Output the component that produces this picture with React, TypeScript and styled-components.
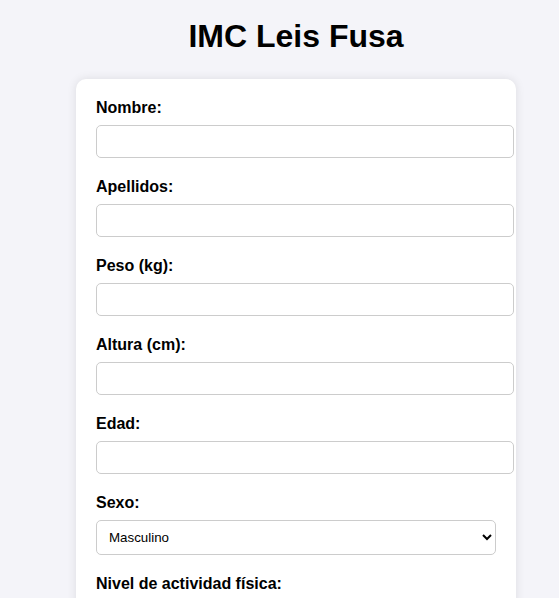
import React, { useState } from 'react';
import styled, { createGlobalStyle } from 'styled-components';

const GlobalStyle = createGlobalStyle`
  body {
    margin: 0;
    background: #f4f4f9;
    font-family: "Liberation Sans", Arial, sans-serif;
    color: #000;
    overflow: hidden;
  }
`;

const Page = styled.div`
  padding: 18px 0 20px 76px;
`;

const Column = styled.div`
  width: 440px;
`;

const Title = styled.h1`
  margin: 0 0 24px;
  font-size: 32px;
  font-weight: bold;
  text-align: center;
`;

const Card = styled.form`
  background: #fff;
  border-radius: 10px;
  box-shadow: 0 0 10px rgba(0, 0, 0, 0.1);
  padding: 20px;
`;

const Label = styled.label`
  display: block;
  margin-bottom: 8px;
  font-size: 16px;
  font-weight: bold;
`;

const Input = styled.input`
  display: block;
  width: 100%;
  padding: 8px;
  margin-bottom: 20px;
  border: 1px solid #ccc;
  border-radius: 5px;
  font-family: "Liberation Sans", Arial, sans-serif;
  font-size: 13.33px;
`;

const Select = styled.select`
  display: block;
  width: 100%;
  padding: 8px;
  margin-bottom: 20px;
  border: 1px solid #ccc;
  border-radius: 5px;
  background: #fff;
  font-family: "Liberation Sans", Arial, sans-serif;
  font-size: 13.33px;
`;

const Button = styled.button`
  width: 100%;
  padding: 10px;
  border: none;
  border-radius: 5px;
  background: #4caf50;
  color: #fff;
  font-size: 16px;
`;

const fields = [
  { id: 'nombre', label: 'Nombre:', type: 'text' },
  { id: 'apellidos', label: 'Apellidos:', type: 'text' },
  { id: 'peso', label: 'Peso (kg):', type: 'number' },
  { id: 'altura', label: 'Altura (cm):', type: 'number' },
  { id: 'edad', label: 'Edad:', type: 'number' },
];

export default function App() {
  const [sexo, setSexo] = useState('masculino');
  const [actividad, setActividad] = useState('sedentario');

  return (
    <>
      <GlobalStyle />
      <Page>
        <Column>
          <Title>IMC Leis Fusa</Title>
          <Card onSubmit={(e) => e.preventDefault()}>
            {fields.map((f) => (
              <div key={f.id}>
                <Label htmlFor={f.id}>{f.label}</Label>
                <Input id={f.id} type={f.type} />
              </div>
            ))}
            <Label htmlFor="sexo">Sexo:</Label>
            <Select id="sexo" value={sexo} onChange={(e) => setSexo(e.target.value)}>
              <option value="masculino">Masculino</option>
              <option value="femenino">Femenino</option>
            </Select>
            <Label htmlFor="actividad">Nivel de actividad física:</Label>
            <Select
              id="actividad"
              value={actividad}
              onChange={(e) => setActividad(e.target.value)}
            >
              <option value="sedentario">Sedentario</option>
              <option value="ligero">Ligero</option>
              <option value="moderado">Moderado</option>
              <option value="intenso">Intenso</option>
            </Select>
            <Button type="submit">Calcular</Button>
          </Card>
        </Column>
      </Page>
    </>
  );
}
